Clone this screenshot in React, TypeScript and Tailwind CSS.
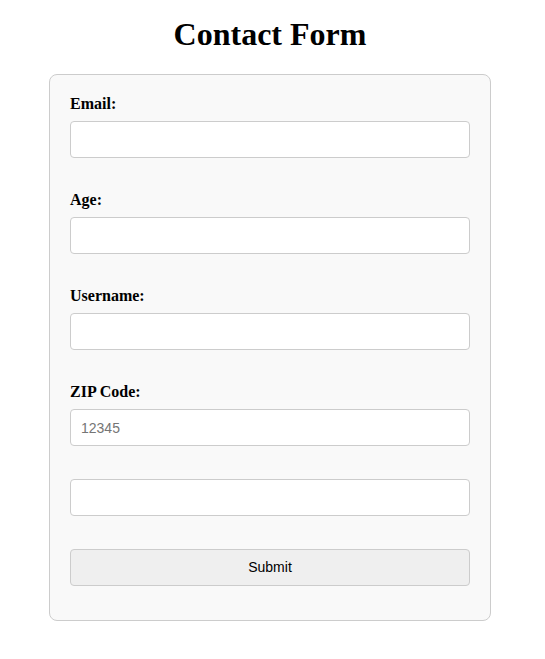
const fields = [
  { id: "email", label: "Email:", type: "email", placeholder: "" },
  { id: "age", label: "Age:", type: "number", placeholder: "" },
  { id: "username", label: "Username:", type: "text", placeholder: "" },
  { id: "zip", label: "ZIP Code:", type: "text", placeholder: "12345" },
];

const inputClass =
  "block h-[37px] w-full rounded-[4px] border border-[#cccccc] bg-white px-[10px] text-[14px] text-black outline-none placeholder:text-[#757575] [font-family:'Liberation_Sans',Arial,sans-serif]";

export default function App() {
  return (
    <div className="min-h-screen bg-white [font-family:'Liberation_Serif','Times_New_Roman',serif]">
      <div className="w-[540px]">
        <h1 className="mb-[21px] mt-[16px] text-center text-[32px] font-bold leading-[37px] text-black">
          Contact Form
        </h1>
        <form
          className="mx-auto w-[442px] rounded-[8px] border border-[#cccccc] bg-[#f9f9f9] px-[20px] pb-[34px] pt-[20px]"
          onSubmit={(e) => e.preventDefault()}
        >
          {fields.map((f) => (
            <div key={f.id} className="mb-[33px]">
              <label htmlFor={f.id} className="block text-[16px] font-bold leading-[18px] text-black">
                {f.label}
              </label>
              <input id={f.id} type={f.type} placeholder={f.placeholder} className={`mt-[8px] ${inputClass}`} />
            </div>
          ))}
          <div className="mb-[33px]">
            <input type="text" className={inputClass} />
          </div>
          <button
            type="submit"
            className="block h-[37px] w-full rounded-[4px] border border-[#cccccc] bg-[#efefef] text-[14px] text-black [font-family:'Liberation_Sans',Arial,sans-serif]"
          >
            Submit
          </button>
        </form>
      </div>
    </div>
  );
}
